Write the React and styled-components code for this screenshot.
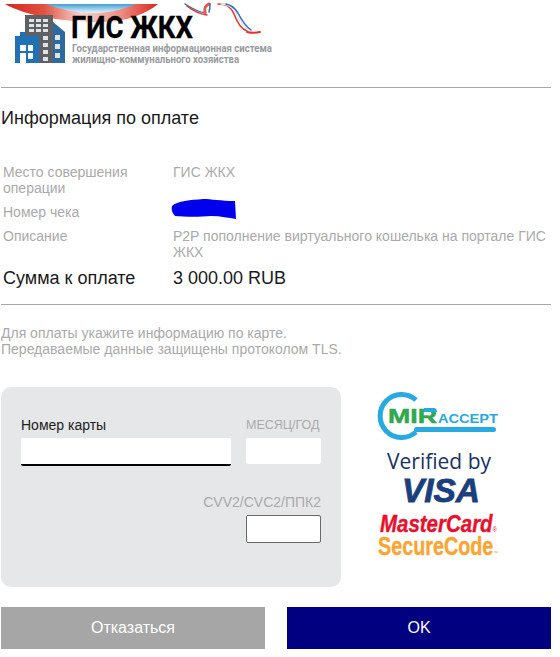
import React from "react";
import styled, { createGlobalStyle } from "styled-components";

const GlobalStyle = createGlobalStyle`
  html, body {
    margin: 0;
    padding: 0;
    background: #fff;
    font-family: "Liberation Sans", Arial, sans-serif;
  }
`;

const Page = styled.div`
  width: 550px;
  margin-left: 1px;
  height: 657px;
  overflow: hidden;
`;

const Header = styled.div`
  height: 87px;
  border-bottom: 1px solid #a9a9a9;
`;

const Title = styled.div`
  margin-top: 19px;
  height: 22px;
  font-size: 18px;
  line-height: 22px;
  color: #1a1a1a;
`;

const Details = styled.div`
  margin-top: 35px;
  padding-left: 2px;
  display: flex;
  flex-direction: column;
  gap: 8px;
`;

const Row = styled.div`
  display: grid;
  grid-template-columns: 170px 1fr;
  margin-top: ${(props) => (props.$big ? "-1px" : "0")};
  font-size: ${(props) => (props.$big ? "18px" : "14px")};
  line-height: ${(props) => (props.$big ? "22px" : "16px")};
  color: ${(props) => (props.$big ? "#1a1a1a" : "#aaaaaa")};
`;

const Scribble = styled.svg`
  display: block;
  margin-top: -6px;
  margin-left: -2px;
`;

const Divider = styled.div`
  margin-top: 15px;
  border-top: 1px solid #a9a9a9;
`;

const Hint = styled.div`
  margin-top: 20px;
  font-size: 14px;
  line-height: 16px;
  color: #aaaaaa;
`;

const PayArea = styled.div`
  margin-top: 30px;
  display: flex;
  gap: 37px;
`;

const CardPanel = styled.div`
  width: 340px;
  height: 200px;
  box-sizing: border-box;
  padding: 29px 20px 0;
  background: #e6e7e8;
  border-radius: 10px;
`;

const PanelRow = styled.div`
  display: flex;
  justify-content: ${(props) => props.$justify || "space-between"};
  margin-top: ${(props) => props.$top || 0}px;
`;

const Field = styled.div`
  display: flex;
  flex-direction: column;
  align-items: flex-end;
`;

const FieldLabel = styled.label`
  display: block;
  width: 100%;
  height: 22px;
  font-size: ${(props) => (props.$small ? "12.5px" : "14px")};
  line-height: 18px;
  white-space: nowrap;
  color: ${(props) => (props.$active ? "#222" : "#aaaaaa")};
  text-align: ${(props) => (props.$right ? "right" : "left")};
`;

const CardInput = styled.input`
  box-sizing: border-box;
  display: block;
  width: ${(props) => props.$width}px;
  height: ${(props) => props.$height}px;
  padding: 0;
  background: #fff;
  outline: none;
  border: none;
  border-radius: 2px;
  border-bottom: ${(props) => (props.$focus ? "2px solid #000" : "none")};
  ${(props) => props.$framed && "border: 1px solid #6b6b6b;"}
`;

const Logos = styled.div`
  width: 125px;
  margin-top: 3px;
  display: flex;
  flex-direction: column;
`;

const LogoSvg = styled.svg`
  display: block;
  overflow: visible;
`;

const Buttons = styled.div`
  margin-top: 20px;
  display: flex;
  justify-content: space-between;
`;

const Button = styled.button`
  width: 264px;
  height: 42px;
  border: none;
  padding: 0;
  color: #fff;
  font-family: inherit;
  font-size: 16px;
  background: ${(props) => (props.$primary ? "#000080" : "#a6a6a6")};
`;

function GisLogo() {
  return (
    <LogoSvg width="290" height="70" viewBox="0 0 290 70">
      <defs>
        <linearGradient id="arcFill" x1="0" y1="0" x2="1" y2="0">
          <stop offset="0" stopColor="#d8261c" />
          <stop offset="0.25" stopColor="#e0503f" />
          <stop offset="0.5" stopColor="#f6d5d0" />
          <stop offset="0.75" stopColor="#ef8f84" />
          <stop offset="1" stopColor="#d8261c" />
        </linearGradient>
        <linearGradient id="blueFill" x1="0" y1="0" x2="0" y2="1">
          <stop offset="0" stopColor="#3f9fd6" />
          <stop offset="1" stopColor="#eaf5fa" />
        </linearGradient>
      </defs>
      <path d="M4 4H157C145 14 125 22 100 22C62 22 25 16 4 4Z" fill="url(#arcFill)" />
      <path d="M45 4H135C118 11 105 13 92 13C75 13 58 9 45 4Z" fill="url(#blueFill)" />
      {/* ribbon */}
      <g fill="none" strokeLinecap="round">
        <path d="M184 4C190 8 197 12 205 13" stroke="#2f6fb8" strokeWidth="1.5" />
        <path d="M186 6C191 10 198 14 206 15" stroke="#e8332a" strokeWidth="1.5" />
        <path d="M204 12C203 8 205 5 208 4" stroke="#e9584f" strokeWidth="3" />
        <path d="M208 12C209 9 209 6 209 4" stroke="#2f6fb8" strokeWidth="1.5" />
        <path d="M217 4C226 4 230 7 233 14C236 22 240 29 246 31" stroke="#e8332a" strokeWidth="1.5" />
        <path d="M220 4C228 4 232 7 235 13C238 20 241 26 248 30" stroke="#dfe8f2" strokeWidth="1.5" />
        <path d="M225 4C230 5 234 8 237 13C240 19 243 25 250 30" stroke="#2f6fb8" strokeWidth="1.5" />
        <path d="M246 32C250 33 255 33 259 32" stroke="#e8332a" strokeWidth="2" />
      </g>
      {/* building */}
      <path d="M24 15H52V63H38V36H24Z" fill="#5e6063" />
      <path d="M52 22L64 32V63H52Z" fill="#2d6a9f" />
      <path d="M14 36H19V32H24V36H38V63H14Z" fill="#1f72b6" />
      <g fill="#dfe3e6">
        <rect x="28" y="19" width="5" height="3" />
        <rect x="35" y="19" width="5" height="3" />
        <rect x="42" y="19" width="5" height="3" />
        <rect x="28" y="24" width="5" height="3" />
        <rect x="35" y="24" width="5" height="3" />
        <rect x="42" y="24" width="5" height="3" />
        <rect x="28" y="29" width="5" height="3" />
        <rect x="35" y="29" width="5" height="3" />
        <rect x="42" y="29" width="5" height="3" />
        <rect x="42" y="36" width="5" height="4" />
        <rect x="42" y="43" width="5" height="4" />
        <rect x="42" y="50" width="5" height="4" />
        <rect x="42" y="57" width="5" height="4" />
        <rect x="54" y="35" width="5" height="5" />
        <rect x="54" y="44" width="5" height="5" />
        <rect x="54" y="53" width="5" height="5" />
      </g>
      <g fill="#fff">
        <rect x="19" y="45" width="6" height="6" />
        <rect x="27" y="45" width="5" height="6" />
        <rect x="19" y="53" width="6" height="10" />
        <rect x="27" y="53" width="5" height="6" />
      </g>
      <text x="70" y="38" fontFamily="Liberation Sans Narrow, Roboto, sans-serif" fontWeight="700" fontSize="32" fill="#000" stroke="#000" strokeWidth="0.3" textLength="122" lengthAdjust="spacingAndGlyphs">ГИС ЖКХ</text>
      <text x="71" y="52" fontFamily="Liberation Sans Narrow, Roboto, sans-serif" fontWeight="700" fontSize="11" fill="#999b9e" textLength="200" lengthAdjust="spacingAndGlyphs">Государственная информационная система</text>
      <text x="71" y="63" fontFamily="Liberation Sans Narrow, Roboto, sans-serif" fontWeight="700" fontSize="11" fill="#999b9e" textLength="167" lengthAdjust="spacingAndGlyphs">жилищно-коммунального хозяйства</text>
    </LogoSvg>
  );
}

function SecurityLogos() {
  return (
    <LogoSvg width="125" height="172" viewBox="0 0 125 172">
      {/* MirAccept key */}
      <path d="M38 10A21.5 21.5 0 1 0 38 42" fill="none" stroke="#27a9e1" strokeWidth="5" />
      <rect x="36" y="37" width="82" height="5" rx="2.5" fill="#27a9e1" />
      <text x="10" y="33" fontFamily="Liberation Sans, sans-serif" fontWeight="700" fontSize="21" fill="#2fa84f" stroke="#2fa84f" strokeWidth="0.5" textLength="49" lengthAdjust="spacingAndGlyphs">MIR</text>
      <path d="M46 18H56C58 18 59 20 59 22H46Z" fill="#27a9e1" />
      <text x="60" y="33" fontFamily="Liberation Sans, sans-serif" fontWeight="700" fontSize="13" fill="#27a9e1" textLength="60" lengthAdjust="spacingAndGlyphs">ACCEPT</text>
      {/* Verified by Visa */}
      <text x="9" y="79" fontFamily="Open Sans, sans-serif" fontSize="22" fill="#1a3364" textLength="104" lengthAdjust="spacingAndGlyphs">Verified by</text>
      <text x="24" y="112" fontFamily="Liberation Sans, sans-serif" fontStyle="italic" fontWeight="700" fontSize="33" fill="#1a3f7c" stroke="#1a3f7c" strokeWidth="0.8" textLength="78" lengthAdjust="spacingAndGlyphs">VISA</text>
      {/* MasterCard SecureCode */}
      <text x="2" y="142" fontFamily="Liberation Sans Narrow, Liberation Sans, sans-serif" fontStyle="italic" fontWeight="700" fontSize="24" fill="#e8112d" stroke="#e8112d" strokeWidth="0.4" textLength="117" lengthAdjust="spacingAndGlyphs">MasterCard<tspan fontSize="7" fontStyle="normal" fontWeight="400" stroke="none">®</tspan></text>
      <text x="0" y="165" fontFamily="Liberation Sans Narrow, Liberation Sans, sans-serif" fontWeight="700" fontSize="25" fill="#f9a533" stroke="#f9a533" strokeWidth="0.4" textLength="120" lengthAdjust="spacingAndGlyphs">SecureCode<tspan fontSize="6" fontWeight="400" stroke="none">™</tspan></text>
    </LogoSvg>
  );
}

export default function App() {
  return (
    <Page>
      <GlobalStyle />
      <Header>
        <GisLogo />
      </Header>
      <Title>Информация по оплате</Title>
      <Details>
        <Row>
          <span>Место совершения<br />операции</span>
          <span>ГИС ЖКХ</span>
        </Row>
        <Row>
          <span>Номер чека</span>
          <Scribble width="66" height="22" viewBox="0 0 66 22">
            <path d="M1 8C6 3 20 2 32 1C40 1 50 3 64 3L65 21C58 20 50 18 40 18C30 19 14 19 4 18C1 15 0 11 1 8Z" fill="#0000ee" />
          </Scribble>
        </Row>
        <Row>
          <span>Описание</span>
          <span>P2P пополнение виртуального кошелька на портале ГИС ЖКХ</span>
        </Row>
        <Row $big>
          <span>Сумма к оплате</span>
          <span>3 000.00 RUB</span>
        </Row>
      </Details>
      <Divider />
      <Hint>
        Для оплаты укажите информацию по карте.
        <br />
        Передаваемые данные защищены протоколом TLS.
      </Hint>
      <PayArea>
        <CardPanel>
          <PanelRow>
            <Field>
              <FieldLabel $active>Номер карты</FieldLabel>
              <CardInput $width={210} $height={28} $focus />
            </Field>
            <Field>
              <FieldLabel $small>МЕСЯЦ/ГОД</FieldLabel>
              <CardInput $width={75} $height={26} />
            </Field>
          </PanelRow>
          <PanelRow $justify="flex-end" $top={27}>
            <Field>
              <FieldLabel $right>CVV2/CVC2/ППК2</FieldLabel>
              <CardInput $width={75} $height={28} $framed />
            </Field>
          </PanelRow>
        </CardPanel>
        <Logos>
          <SecurityLogos />
        </Logos>
      </PayArea>
      <Buttons>
        <Button>Отказаться</Button>
        <Button $primary>OK</Button>
      </Buttons>
    </Page>
  );
}
